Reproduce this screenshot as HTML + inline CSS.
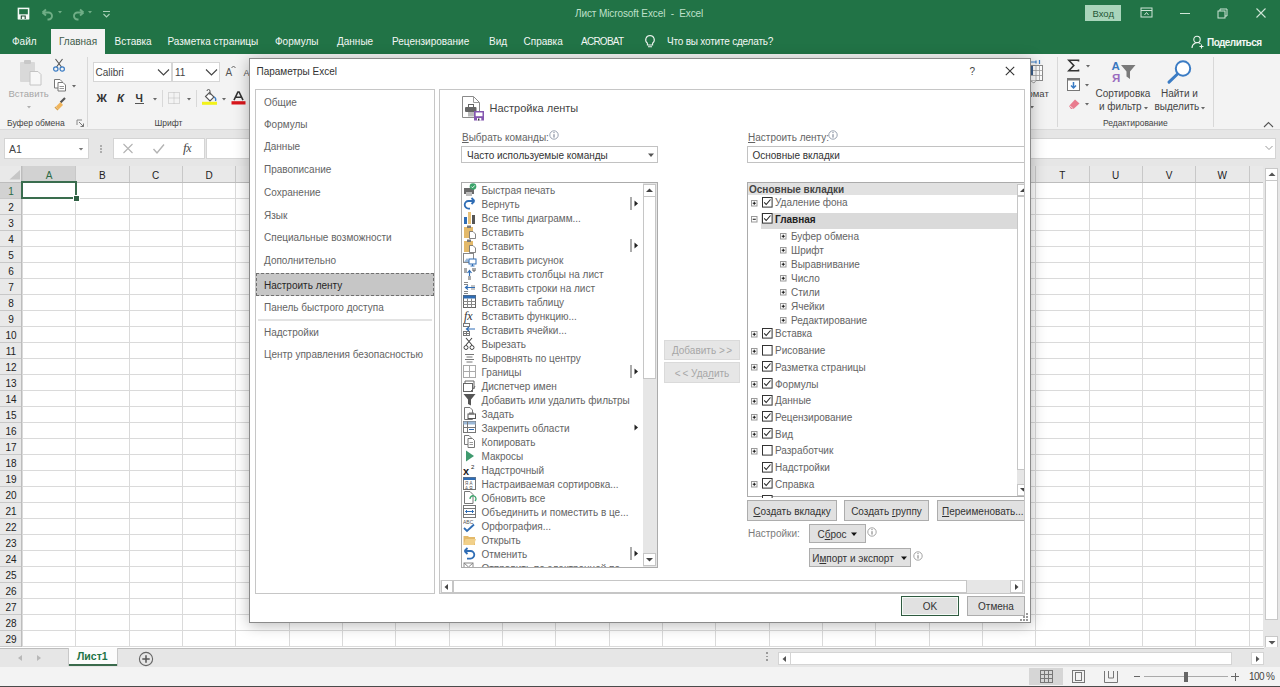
<!DOCTYPE html>
<html><head><meta charset="utf-8"><style>
html,body{margin:0;padding:0;}
body{width:1280px;height:687px;overflow:hidden;position:relative;background:#fff;font-family:"Liberation Sans", sans-serif;}
.a{position:absolute;}
.t{position:absolute;white-space:pre;line-height:1;}
</style></head><body>
<div class="a" style="left:0px;top:0px;width:1280px;height:54px;background:#217346"></div>
<svg class="a" style="left:17px;top:7px;" width="14" height="14" viewBox="0 0 14 14"><rect x="1.4" y="1.4" width="10.2" height="10.2" fill="none" stroke="#f4faf6" stroke-width="1.5"/><rect x="1" y="7.3" width="11" height="5" fill="#f4faf6"/><path d="M4.3 12 V9 H8.2 V12" fill="none" stroke="#1d4a30" stroke-width="1.1"/></svg>
<svg class="a" style="left:40px;top:7px;" width="16" height="14" viewBox="0 0 16 14"><path d="M2.5 5.5 L6 2.5 M2.5 5.5 L6 8.5 M2.5 5.5 H8.5 a3.5 3.5 0 0 1 0 7 H7.5" fill="none" stroke="#6fae86" stroke-width="1.9"/></svg>
<svg class="a" style="left:56px;top:9px;" width="8" height="6" viewBox="0 0 8 6"><path d="M2 2.0 L6 2.0 L4 4.5 Z" fill="#6fae86"/></svg>
<svg class="a" style="left:70px;top:7px;" width="16" height="14" viewBox="0 0 16 14"><path d="M13.5 5.5 L10 2.5 M13.5 5.5 L10 8.5 M13.5 5.5 H7.5 a3.5 3.5 0 0 0 0 7 H8.5" fill="none" stroke="#6fae86" stroke-width="1.9"/></svg>
<svg class="a" style="left:86px;top:9px;" width="8" height="6" viewBox="0 0 8 6"><path d="M2 2.0 L6 2.0 L4 4.5 Z" fill="#6fae86"/></svg>
<svg class="a" style="left:102px;top:10px;" width="10" height="8" viewBox="0 0 10 8"><path d="M1 1.5 H8 M1.5 4 L4.5 7 L7.5 4" fill="none" stroke="#a9cfb7" stroke-width="1.1"/></svg>
<div class="t " style="left:575px;top:9px;font-size:10px;color:#bfe0ca;letter-spacing:-0.1px">Лист Microsoft Excel&nbsp; - &nbsp;Excel</div>
<div class="a" style="left:1085px;top:5px;width:36px;height:16px;background:#a9d5bb"></div>
<div class="t " style="left:1092.5px;top:9px;font-size:9.5px;color:#1f5636;">Вход</div>
<svg class="a" style="left:1140px;top:7px;" width="13" height="11" viewBox="0 0 13 11"><rect x="1" y="1" width="11" height="9" fill="none" stroke="#cfe5d7" stroke-width="1"/><path d="M1 3.5 H12" stroke="#cfe5d7"/><path d="M4.5 8 L6.5 5.5 L8.5 8" fill="none" stroke="#cfe5d7"/></svg>
<div class="a" style="left:1180px;top:13px;width:10px;height:1px;background:#cfe5d7"></div>
<svg class="a" style="left:1217px;top:8px;" width="12" height="11" viewBox="0 0 12 11"><rect x="1" y="3" width="7" height="7" fill="none" stroke="#cfe5d7"/><path d="M3 3 V1 H10 V8 H8" fill="none" stroke="#cfe5d7"/></svg>
<svg class="a" style="left:1255px;top:7px;" width="12" height="12" viewBox="0 0 12 12"><path d="M1.5 1.5 L10.5 10.5 M10.5 1.5 L1.5 10.5" stroke="#cfe5d7" stroke-width="1.1"/></svg>
<div class="a" style="left:51px;top:29px;width:54px;height:25px;background:#f3f3f3"></div>
<div class="t " style="left:12px;top:37px;font-size:10px;color:#f2f7f4;">Файл</div>
<div class="t " style="left:114.5px;top:37px;font-size:10px;color:#f2f7f4;">Вставка</div>
<div class="t " style="left:167.5px;top:37px;font-size:10px;color:#f2f7f4;">Разметка страницы</div>
<div class="t " style="left:275px;top:37px;font-size:10px;color:#f2f7f4;">Формулы</div>
<div class="t " style="left:337px;top:37px;font-size:10px;color:#f2f7f4;">Данные</div>
<div class="t " style="left:392px;top:37px;font-size:10px;color:#f2f7f4;">Рецензирование</div>
<div class="t " style="left:489px;top:37px;font-size:10px;color:#f2f7f4;">Вид</div>
<div class="t " style="left:523.5px;top:37px;font-size:10px;color:#f2f7f4;">Справка</div>
<div class="t " style="left:581px;top:37px;font-size:10px;color:#f2f7f4;letter-spacing:-0.75px">ACROBAT</div>
<div class="t " style="left:667px;top:37px;font-size:10px;color:#f2f7f4;letter-spacing:-0.2px">Что вы хотите сделать?</div>
<div class="t " style="left:59px;top:37px;font-size:10px;color:#3f5c4b;">Главная</div>
<svg class="a" style="left:643px;top:34px;" width="14" height="15" viewBox="0 0 14 15"><path d="M7 1.5 a4.3 4.3 0 0 1 2.6 7.7 V11 H4.4 V9.2 A4.3 4.3 0 0 1 7 1.5 Z M5 12.7 H9" fill="none" stroke="#eef5f0" stroke-width="1.1"/></svg>
<svg class="a" style="left:1191px;top:35px;" width="15" height="14" viewBox="0 0 15 14"><circle cx="6" cy="4.5" r="3.2" fill="none" stroke="#eef5f0" stroke-width="1.1"/><path d="M1 13 a5.2 5.2 0 0 1 8.5 -4.2 M10.5 9.5 V13.5 M8.5 11.5 H12.5" fill="none" stroke="#eef5f0" stroke-width="1.1"/></svg>
<div class="t " style="left:1207px;top:38px;font-size:10px;color:#f2f7f4;font-weight:bold;letter-spacing:-0.55px">Поделиться</div>
<div class="a" style="left:0px;top:54px;width:1280px;height:76px;background:#f3f3f3"></div>
<div class="a" style="left:0px;top:129px;width:1280px;height:1px;background:#dadada"></div>
<svg class="a" style="left:17px;top:58px;" width="26" height="30" viewBox="0 0 26 30"><rect x="3" y="4" width="15" height="20" rx="1" fill="#d9d9d9"/><rect x="7" y="2" width="7" height="4" rx="1" fill="#c8c8c8"/><path d="M13 13.5 H21 L24 16.5 V27 H13 Z" fill="#f7f7f7" stroke="#c4c4c4"/></svg>
<div class="t " style="left:8.5px;top:89px;font-size:9.5px;color:#a6a6a6;">Вставить</div>
<svg class="a" style="left:24.5px;top:104px;" width="8" height="6" viewBox="0 0 8 6"><path d="M2 2.0 L6 2.0 L4 4.5 Z" fill="#b0b0b0"/></svg>
<svg class="a" style="left:52px;top:58px;" width="14" height="14" viewBox="0 0 14 14"><path d="M3.5 1 L9.5 9 M10.5 1 L4.5 9" stroke="#555" stroke-width="1.1"/><circle cx="3.8" cy="11" r="2.2" fill="none" stroke="#3b7cc4" stroke-width="1.2"/><circle cx="10.2" cy="11" r="2.2" fill="none" stroke="#3b7cc4" stroke-width="1.2"/></svg>
<svg class="a" style="left:53px;top:78px;" width="14" height="14" viewBox="0 0 14 14"><path d="M1.5 1.5 H7 L9 3.5 V10 H1.5 Z" fill="#fff" stroke="#777"/><path d="M5 4.5 H10 L12.5 7 V13 H5 Z" fill="#fff" stroke="#777"/><path d="M6.5 8.5 H11 M6.5 10.5 H11" stroke="#999"/></svg>
<svg class="a" style="left:70px;top:82.5px;" width="8" height="6" viewBox="0 0 8 6"><path d="M2 2.0 L6 2.0 L4 4.5 Z" fill="#666"/></svg>
<svg class="a" style="left:53px;top:97px;" width="14" height="14" viewBox="0 0 14 14"><path d="M12 1 L7.5 5.5" stroke="#555" stroke-width="2.2"/><path d="M7.5 5 L3 9.5 L5.5 12.5 L10 8 Z" fill="#f0b45a"/><path d="M2 10 L5 13" stroke="#d9a14b" stroke-width="1.5"/></svg>
<div class="t " style="left:7px;top:119px;font-size:8.5px;color:#444;">Буфер обмена</div>
<svg class="a" style="left:76px;top:119px;" width="9" height="9" viewBox="0 0 9 9"><path d="M1 1 H6 M1 1 V6" stroke="#888"/><path d="M3 3 L7.5 7.5 M7.5 4.5 V7.5 H4.5" fill="none" stroke="#777"/></svg>
<div class="a" style="left:87px;top:57px;width:1px;height:70px;background:#d8d8d8"></div>
<div class="a" style="left:93px;top:62px;width:79px;height:20px;background:#fff;box-sizing:border-box;border:1px solid #d6d6d6"></div>
<div class="t " style="left:95.5px;top:68px;font-size:10px;color:#444;">Calibri</div>
<svg class="a" style="left:157px;top:68px;" width="13" height="9" viewBox="0 0 13 9"><path d="M1 1.5 L6.5 7 L12 1.5" fill="none" stroke="#444" stroke-width="1.1"/></svg>
<div class="a" style="left:172px;top:62px;width:48px;height:20px;background:#fff;box-sizing:border-box;border:1px solid #d6d6d6"></div>
<div class="t " style="left:175px;top:68px;font-size:10px;color:#444;">11</div>
<svg class="a" style="left:205px;top:68px;" width="13" height="9" viewBox="0 0 13 9"><path d="M1 1.5 L6.5 7 L12 1.5" fill="none" stroke="#444" stroke-width="1.1"/></svg>
<div class="t " style="left:225.5px;top:68px;font-size:10px;color:#555;">A</div>
<svg class="a" style="left:231px;top:65px;" width="5" height="4" viewBox="0 0 5 4"><path d="M0.5 3 L2.5 1 L4.5 3" fill="none" stroke="#555" stroke-width="0.9"/></svg>
<div class="t " style="left:243.5px;top:69px;font-size:9px;color:#555;">A</div>
<div class="t " style="left:96.5px;top:93px;font-size:11.5px;color:#333;font-weight:bold">Ж</div>
<div class="t " style="left:117px;top:93px;font-size:11.5px;color:#333;font-weight:bold;font-style:italic">К</div>
<div class="t " style="left:135.5px;top:93px;font-size:10.5px;color:#333;font-weight:bold">Ч</div>
<div class="a" style="left:135px;top:103px;width:9px;height:1.3px;background:#555"></div>
<svg class="a" style="left:150.5px;top:95.5px;" width="8" height="6" viewBox="0 0 8 6"><path d="M2 2.0 L6 2.0 L4 4.5 Z" fill="#666"/></svg>
<div class="a" style="left:162px;top:90px;width:1px;height:17px;background:#d8d8d8"></div>
<svg class="a" style="left:168px;top:92px;" width="13" height="13" viewBox="0 0 13 13"><rect x="0.5" y="0.5" width="11" height="11" fill="none" stroke="#bbb" stroke-dasharray="1 1"/><path d="M6 0.5 V11.5 M0.5 6 H11.5" stroke="#bbb" stroke-dasharray="1 1"/></svg>
<svg class="a" style="left:185px;top:95.5px;" width="8" height="6" viewBox="0 0 8 6"><path d="M2 2.0 L6 2.0 L4 4.5 Z" fill="#666"/></svg>
<div class="a" style="left:196px;top:90px;width:1px;height:17px;background:#d8d8d8"></div>
<svg class="a" style="left:201px;top:89px;" width="17" height="17" viewBox="0 0 17 17"><path d="M4.5 7.5 L8.5 3.5 L13 8 L9 12 Z" fill="#fff" stroke="#555" stroke-width="1.1"/><path d="M6 2 a1.5 1.5 0 0 1 3 0 V6" fill="none" stroke="#555"/><path d="M13 8 q2.5 1 1.5 4" fill="none" stroke="#3b7cc4" stroke-width="1.3"/><rect x="1" y="12.8" width="15" height="3" fill="#f2f21a"/></svg>
<svg class="a" style="left:219.5px;top:95.5px;" width="8" height="6" viewBox="0 0 8 6"><path d="M2 2.0 L6 2.0 L4 4.5 Z" fill="#666"/></svg>
<svg class="a" style="left:230px;top:89px;" width="17" height="17" viewBox="0 0 17 17"><path d="M4 11.2 L7.9 3 H9.1 L13 11.2 M5.8 8.3 H11.2" fill="none" stroke="#333" stroke-width="1.6"/><rect x="1.5" y="12.2" width="14" height="3.3" fill="#d9161c"/></svg>
<div class="t " style="left:154.5px;top:119px;font-size:8.5px;color:#444;">Шрифт</div>
<svg class="a" style="left:1027px;top:58px;" width="18" height="28" viewBox="0 0 18 28"><path d="M2 4 H9 M9 2.5 V5.5 M12.5 2 V6" stroke="#3b7cc4" stroke-width="1.2"/><rect x="2.5" y="7.5" width="13" height="15" fill="#fff" stroke="#8a8a8a"/><path d="M2.5 12.5 H15.5 M2.5 17.5 H15.5 M9 7.5 V22.5 M12.5 7.5 V22.5" stroke="#a0a0a0" stroke-width="0.8"/><rect x="3" y="8" width="3" height="9" fill="#3b5f8c"/><path d="M3 22.5 L7 25 L9 22.5" fill="#fff" stroke="#8a8a8a" stroke-width="0.8"/></svg>
<div class="t " style="left:1027.5px;top:89px;font-size:9.5px;color:#444;">омат</div>
<svg class="a" style="left:1028px;top:104px;" width="8" height="6" viewBox="0 0 8 6"><path d="M2 2.0 L6 2.0 L4 4.5 Z" fill="#666"/></svg>
<div class="a" style="left:1057px;top:57px;width:1px;height:70px;background:#d8d8d8"></div>
<svg class="a" style="left:1067px;top:59px;" width="13" height="13" viewBox="0 0 13 13"><path d="M11.5 2.5 V1.2 H1.8 L6.8 6.5 L1.8 11.8 H11.5 V10.5" fill="none" stroke="#333" stroke-width="1.6"/></svg>
<svg class="a" style="left:1084px;top:62.5px;" width="8" height="6" viewBox="0 0 8 6"><path d="M2 2.0 L6 2.0 L4 4.5 Z" fill="#666"/></svg>
<svg class="a" style="left:1067px;top:78px;" width="13" height="14" viewBox="0 0 13 14"><rect x="0.5" y="0.5" width="12" height="12" fill="#fff" stroke="#777"/><rect x="0.5" y="0.5" width="12" height="2" fill="#777"/><path d="M6.5 4 V10 M4 7.5 L6.5 10 L9 7.5" fill="none" stroke="#3b7cc4" stroke-width="1.5"/></svg>
<svg class="a" style="left:1082.5px;top:81.5px;" width="8" height="6" viewBox="0 0 8 6"><path d="M2 2.0 L6 2.0 L4 4.5 Z" fill="#666"/></svg>
<svg class="a" style="left:1067px;top:97px;" width="14" height="13" viewBox="0 0 14 13"><path d="M2 9 L8 2.5 L12.5 6.5 L6.5 12 H4 Z" fill="#e97b8e"/><path d="M2.5 8.5 L6.5 12" stroke="#f3f3f3" stroke-width="0.8"/></svg>
<svg class="a" style="left:1082.5px;top:101px;" width="8" height="6" viewBox="0 0 8 6"><path d="M2 2.0 L6 2.0 L4 4.5 Z" fill="#666"/></svg>
<svg class="a" style="left:1110px;top:59px;" width="27" height="24" viewBox="0 0 27 24"><text x="1.5" y="10.6" font-family="Liberation Sans" font-weight="bold" font-size="11.5" fill="#3a78c0">А</text><text x="2" y="22.6" font-family="Liberation Sans" font-weight="bold" font-size="11.5" fill="#9a6cbf">Я</text><path d="M11 6 H25.5 L20 12.5 V20 L16.5 17.5 V12.5 Z" fill="#7a7a7a"/></svg>
<div class="t " style="left:1095.5px;top:89px;font-size:10px;color:#444;">Сортировка</div>
<div class="t " style="left:1099px;top:102px;font-size:10px;color:#444;">и фильтр</div>
<svg class="a" style="left:1141.5px;top:104.5px;" width="8" height="6" viewBox="0 0 8 6"><path d="M2 2.0 L6 2.0 L4 4.5 Z" fill="#666"/></svg>
<svg class="a" style="left:1166px;top:59px;" width="28" height="26" viewBox="0 0 28 26"><circle cx="17" cy="9.5" r="7.2" fill="#fff" stroke="#3b7cc4" stroke-width="2"/><path d="M11.5 15 L3 23.2" stroke="#3b7cc4" stroke-width="3" stroke-linecap="round"/></svg>
<div class="t " style="left:1161px;top:89px;font-size:10px;color:#444;">Найти и</div>
<div class="t " style="left:1154.5px;top:102px;font-size:10px;color:#444;">выделить</div>
<svg class="a" style="left:1199px;top:104.5px;" width="8" height="6" viewBox="0 0 8 6"><path d="M2 2.0 L6 2.0 L4 4.5 Z" fill="#666"/></svg>
<div class="t " style="left:1103px;top:119px;font-size:8.5px;color:#444;">Редактирование</div>
<div class="a" style="left:1213px;top:57px;width:1px;height:70px;background:#d8d8d8"></div>
<svg class="a" style="left:1263px;top:121px;" width="11" height="7" viewBox="0 0 11 7"><path d="M1 6 L5.5 1.5 L10 6" fill="none" stroke="#555" stroke-width="1.1"/></svg>
<div class="a" style="left:0px;top:130px;width:1280px;height:37px;background:#e6e6e6"></div>
<div class="a" style="left:4px;top:138px;width:85px;height:21px;background:#fff;box-sizing:border-box;border:1px solid #d4d4d4"></div>
<div class="t " style="left:9px;top:144px;font-size:10.5px;color:#444;">A1</div>
<svg class="a" style="left:76.5px;top:145.5px;" width="8" height="6" viewBox="0 0 8 6"><path d="M1.7999999999999998 1.9 L6.2 1.9 L4 4.6 Z" fill="#777"/></svg>
<div class="a" style="left:100px;top:145px;width:1.6px;height:1.6px;background:#9a9a9a;border-radius:1px"></div>
<div class="a" style="left:100px;top:148px;width:1.6px;height:1.6px;background:#9a9a9a;border-radius:1px"></div>
<div class="a" style="left:100px;top:151px;width:1.6px;height:1.6px;background:#9a9a9a;border-radius:1px"></div>
<div class="a" style="left:113px;top:138px;width:92px;height:21px;background:#fff;box-sizing:border-box;border:1px solid #d4d4d4"></div>
<svg class="a" style="left:122px;top:143px;" width="12" height="11" viewBox="0 0 12 11"><path d="M1.5 1 L10.5 10 M10.5 1 L1.5 10" stroke="#b3b3b3" stroke-width="1.1"/></svg>
<svg class="a" style="left:152px;top:143px;" width="13" height="12" viewBox="0 0 13 12"><path d="M1.5 6 L5 10 L12 1.5" fill="none" stroke="#b3b3b3" stroke-width="1.4"/></svg>
<div class="t" style="left:183px;top:141px;font-family:'Liberation Serif',serif;font-style:italic;font-size:13.5px;color:#4a4a4a;letter-spacing:-0.5px">f<span style="font-size:12px">x</span></div>
<div class="a" style="left:206px;top:138px;width:1070px;height:21px;background:#fff;box-sizing:border-box;border:1px solid #d4d4d4"></div>
<svg class="a" style="left:1264px;top:144px;" width="10" height="8" viewBox="0 0 10 8"><path d="M1.5 2 L5 5.5 L8.5 2" fill="none" stroke="#999" stroke-width="1"/></svg>
<div class="a" style="left:0px;top:166px;width:1263px;height:16px;background:#e9e9e9"></div>
<div class="a" style="left:0px;top:182px;width:22px;height:466px;background:#e9e9e9"></div>
<svg class="a" style="left:8px;top:169px;" width="13" height="11" viewBox="0 0 13 11"><path d="M12 1 V10.5 H1.5 Z" fill="#c6c6c6"/></svg>
<div class="a" style="left:22px;top:166px;width:54px;height:16px;background:#d2d2d2"></div>
<div class="a" style="left:0px;top:182px;width:22px;height:16px;background:#d2d2d2"></div>
<svg class="a" style="left:0px;top:0px;pointer-events:none" width="1280" height="687" viewBox="0 0 1280 687"><path d="M22.50 182 V647" stroke="#dadada" stroke-width="1"/><path d="M22.50 166 V182" stroke="#c8c8c8" stroke-width="1"/><path d="M75.50 182 V647" stroke="#dadada" stroke-width="1"/><path d="M75.50 166 V182" stroke="#c8c8c8" stroke-width="1"/><path d="M129.50 182 V647" stroke="#dadada" stroke-width="1"/><path d="M129.50 166 V182" stroke="#c8c8c8" stroke-width="1"/><path d="M182.50 182 V647" stroke="#dadada" stroke-width="1"/><path d="M182.50 166 V182" stroke="#c8c8c8" stroke-width="1"/><path d="M235.50 182 V647" stroke="#dadada" stroke-width="1"/><path d="M235.50 166 V182" stroke="#c8c8c8" stroke-width="1"/><path d="M289.50 182 V647" stroke="#dadada" stroke-width="1"/><path d="M289.50 166 V182" stroke="#c8c8c8" stroke-width="1"/><path d="M342.50 182 V647" stroke="#dadada" stroke-width="1"/><path d="M342.50 166 V182" stroke="#c8c8c8" stroke-width="1"/><path d="M395.50 182 V647" stroke="#dadada" stroke-width="1"/><path d="M395.50 166 V182" stroke="#c8c8c8" stroke-width="1"/><path d="M449.50 182 V647" stroke="#dadada" stroke-width="1"/><path d="M449.50 166 V182" stroke="#c8c8c8" stroke-width="1"/><path d="M502.50 182 V647" stroke="#dadada" stroke-width="1"/><path d="M502.50 166 V182" stroke="#c8c8c8" stroke-width="1"/><path d="M555.50 182 V647" stroke="#dadada" stroke-width="1"/><path d="M555.50 166 V182" stroke="#c8c8c8" stroke-width="1"/><path d="M609.50 182 V647" stroke="#dadada" stroke-width="1"/><path d="M609.50 166 V182" stroke="#c8c8c8" stroke-width="1"/><path d="M662.50 182 V647" stroke="#dadada" stroke-width="1"/><path d="M662.50 166 V182" stroke="#c8c8c8" stroke-width="1"/><path d="M715.50 182 V647" stroke="#dadada" stroke-width="1"/><path d="M715.50 166 V182" stroke="#c8c8c8" stroke-width="1"/><path d="M769.50 182 V647" stroke="#dadada" stroke-width="1"/><path d="M769.50 166 V182" stroke="#c8c8c8" stroke-width="1"/><path d="M822.50 182 V647" stroke="#dadada" stroke-width="1"/><path d="M822.50 166 V182" stroke="#c8c8c8" stroke-width="1"/><path d="M875.50 182 V647" stroke="#dadada" stroke-width="1"/><path d="M875.50 166 V182" stroke="#c8c8c8" stroke-width="1"/><path d="M929.50 182 V647" stroke="#dadada" stroke-width="1"/><path d="M929.50 166 V182" stroke="#c8c8c8" stroke-width="1"/><path d="M982.50 182 V647" stroke="#dadada" stroke-width="1"/><path d="M982.50 166 V182" stroke="#c8c8c8" stroke-width="1"/><path d="M1035.50 182 V647" stroke="#dadada" stroke-width="1"/><path d="M1035.50 166 V182" stroke="#c8c8c8" stroke-width="1"/><path d="M1089.50 182 V647" stroke="#dadada" stroke-width="1"/><path d="M1089.50 166 V182" stroke="#c8c8c8" stroke-width="1"/><path d="M1142.50 182 V647" stroke="#dadada" stroke-width="1"/><path d="M1142.50 166 V182" stroke="#c8c8c8" stroke-width="1"/><path d="M1195.50 182 V647" stroke="#dadada" stroke-width="1"/><path d="M1195.50 166 V182" stroke="#c8c8c8" stroke-width="1"/><path d="M1249.50 182 V647" stroke="#dadada" stroke-width="1"/><path d="M1249.50 166 V182" stroke="#c8c8c8" stroke-width="1"/><path d="M1302.50 182 V647" stroke="#dadada" stroke-width="1"/><path d="M1302.50 166 V182" stroke="#c8c8c8" stroke-width="1"/><path d="M22 182.5 H1263" stroke="#dadada" stroke-width="1"/><path d="M0 182.5 H22" stroke="#c8c8c8" stroke-width="1"/><path d="M22 198.5 H1263" stroke="#dadada" stroke-width="1"/><path d="M0 198.5 H22" stroke="#c8c8c8" stroke-width="1"/><path d="M22 214.5 H1263" stroke="#dadada" stroke-width="1"/><path d="M0 214.5 H22" stroke="#c8c8c8" stroke-width="1"/><path d="M22 230.5 H1263" stroke="#dadada" stroke-width="1"/><path d="M0 230.5 H22" stroke="#c8c8c8" stroke-width="1"/><path d="M22 246.5 H1263" stroke="#dadada" stroke-width="1"/><path d="M0 246.5 H22" stroke="#c8c8c8" stroke-width="1"/><path d="M22 262.5 H1263" stroke="#dadada" stroke-width="1"/><path d="M0 262.5 H22" stroke="#c8c8c8" stroke-width="1"/><path d="M22 278.5 H1263" stroke="#dadada" stroke-width="1"/><path d="M0 278.5 H22" stroke="#c8c8c8" stroke-width="1"/><path d="M22 294.5 H1263" stroke="#dadada" stroke-width="1"/><path d="M0 294.5 H22" stroke="#c8c8c8" stroke-width="1"/><path d="M22 310.5 H1263" stroke="#dadada" stroke-width="1"/><path d="M0 310.5 H22" stroke="#c8c8c8" stroke-width="1"/><path d="M22 326.5 H1263" stroke="#dadada" stroke-width="1"/><path d="M0 326.5 H22" stroke="#c8c8c8" stroke-width="1"/><path d="M22 342.5 H1263" stroke="#dadada" stroke-width="1"/><path d="M0 342.5 H22" stroke="#c8c8c8" stroke-width="1"/><path d="M22 358.5 H1263" stroke="#dadada" stroke-width="1"/><path d="M0 358.5 H22" stroke="#c8c8c8" stroke-width="1"/><path d="M22 374.5 H1263" stroke="#dadada" stroke-width="1"/><path d="M0 374.5 H22" stroke="#c8c8c8" stroke-width="1"/><path d="M22 390.5 H1263" stroke="#dadada" stroke-width="1"/><path d="M0 390.5 H22" stroke="#c8c8c8" stroke-width="1"/><path d="M22 406.5 H1263" stroke="#dadada" stroke-width="1"/><path d="M0 406.5 H22" stroke="#c8c8c8" stroke-width="1"/><path d="M22 422.5 H1263" stroke="#dadada" stroke-width="1"/><path d="M0 422.5 H22" stroke="#c8c8c8" stroke-width="1"/><path d="M22 438.5 H1263" stroke="#dadada" stroke-width="1"/><path d="M0 438.5 H22" stroke="#c8c8c8" stroke-width="1"/><path d="M22 454.5 H1263" stroke="#dadada" stroke-width="1"/><path d="M0 454.5 H22" stroke="#c8c8c8" stroke-width="1"/><path d="M22 470.5 H1263" stroke="#dadada" stroke-width="1"/><path d="M0 470.5 H22" stroke="#c8c8c8" stroke-width="1"/><path d="M22 486.5 H1263" stroke="#dadada" stroke-width="1"/><path d="M0 486.5 H22" stroke="#c8c8c8" stroke-width="1"/><path d="M22 502.5 H1263" stroke="#dadada" stroke-width="1"/><path d="M0 502.5 H22" stroke="#c8c8c8" stroke-width="1"/><path d="M22 518.5 H1263" stroke="#dadada" stroke-width="1"/><path d="M0 518.5 H22" stroke="#c8c8c8" stroke-width="1"/><path d="M22 534.5 H1263" stroke="#dadada" stroke-width="1"/><path d="M0 534.5 H22" stroke="#c8c8c8" stroke-width="1"/><path d="M22 550.5 H1263" stroke="#dadada" stroke-width="1"/><path d="M0 550.5 H22" stroke="#c8c8c8" stroke-width="1"/><path d="M22 566.5 H1263" stroke="#dadada" stroke-width="1"/><path d="M0 566.5 H22" stroke="#c8c8c8" stroke-width="1"/><path d="M22 582.5 H1263" stroke="#dadada" stroke-width="1"/><path d="M0 582.5 H22" stroke="#c8c8c8" stroke-width="1"/><path d="M22 598.5 H1263" stroke="#dadada" stroke-width="1"/><path d="M0 598.5 H22" stroke="#c8c8c8" stroke-width="1"/><path d="M22 614.5 H1263" stroke="#dadada" stroke-width="1"/><path d="M0 614.5 H22" stroke="#c8c8c8" stroke-width="1"/><path d="M22 630.5 H1263" stroke="#dadada" stroke-width="1"/><path d="M0 630.5 H22" stroke="#c8c8c8" stroke-width="1"/><path d="M22 646.5 H1263" stroke="#dadada" stroke-width="1"/><path d="M0 646.5 H22" stroke="#c8c8c8" stroke-width="1"/></svg>
<div class="a" style="left:0px;top:181.5px;width:1263px;height:1px;background:#bdbdbd"></div>
<div class="a" style="left:21px;top:166px;width:1px;height:482px;background:#bdbdbd"></div>
<div class="t" style="left:-150.98333333333335px;width:400px;text-align:center;top:171px;font-size:10px;color:#2d6a46;">A</div>
<div class="t" style="left:-97.64999999999999px;width:400px;text-align:center;top:171px;font-size:10px;color:#222;">B</div>
<div class="t" style="left:-44.31666666666666px;width:400px;text-align:center;top:171px;font-size:10px;color:#222;">C</div>
<div class="t" style="left:9.016666666666652px;width:400px;text-align:center;top:171px;font-size:10px;color:#222;">D</div>
<div class="t" style="left:62.35000000000002px;width:400px;text-align:center;top:171px;font-size:10px;color:#222;">E</div>
<div class="t" style="left:115.6833333333334px;width:400px;text-align:center;top:171px;font-size:10px;color:#222;">F</div>
<div class="t" style="left:169.0166666666667px;width:400px;text-align:center;top:171px;font-size:10px;color:#222;">G</div>
<div class="t" style="left:222.35000000000008px;width:400px;text-align:center;top:171px;font-size:10px;color:#222;">H</div>
<div class="t" style="left:275.6833333333334px;width:400px;text-align:center;top:171px;font-size:10px;color:#222;">I</div>
<div class="t" style="left:329.01666666666665px;width:400px;text-align:center;top:171px;font-size:10px;color:#222;">J</div>
<div class="t" style="left:382.35px;width:400px;text-align:center;top:171px;font-size:10px;color:#222;">K</div>
<div class="t" style="left:435.6833333333334px;width:400px;text-align:center;top:171px;font-size:10px;color:#222;">L</div>
<div class="t" style="left:489.01666666666665px;width:400px;text-align:center;top:171px;font-size:10px;color:#222;">M</div>
<div class="t" style="left:542.35px;width:400px;text-align:center;top:171px;font-size:10px;color:#222;">N</div>
<div class="t" style="left:595.6833333333334px;width:400px;text-align:center;top:171px;font-size:10px;color:#222;">O</div>
<div class="t" style="left:649.0166666666667px;width:400px;text-align:center;top:171px;font-size:10px;color:#222;">P</div>
<div class="t" style="left:702.35px;width:400px;text-align:center;top:171px;font-size:10px;color:#222;">Q</div>
<div class="t" style="left:755.6833333333334px;width:400px;text-align:center;top:171px;font-size:10px;color:#222;">R</div>
<div class="t" style="left:809.0166666666667px;width:400px;text-align:center;top:171px;font-size:10px;color:#222;">S</div>
<div class="t" style="left:862.3500000000001px;width:400px;text-align:center;top:171px;font-size:10px;color:#222;">T</div>
<div class="t" style="left:915.6833333333334px;width:400px;text-align:center;top:171px;font-size:10px;color:#222;">U</div>
<div class="t" style="left:969.0166666666667px;width:400px;text-align:center;top:171px;font-size:10px;color:#222;">V</div>
<div class="t" style="left:1022.3500000000001px;width:400px;text-align:center;top:171px;font-size:10px;color:#222;">W</div>
<div class="t" style="left:1075.6833333333334px;width:400px;text-align:center;top:171px;font-size:10px;color:#222;">X</div>
<div class="t" style="left:1px;width:20px;text-align:center;top:187px;font-size:10px;color:#2d6a46">1</div>
<div class="t" style="left:1px;width:20px;text-align:center;top:203px;font-size:10px;color:#222">2</div>
<div class="t" style="left:1px;width:20px;text-align:center;top:219px;font-size:10px;color:#222">3</div>
<div class="t" style="left:1px;width:20px;text-align:center;top:235px;font-size:10px;color:#222">4</div>
<div class="t" style="left:1px;width:20px;text-align:center;top:251px;font-size:10px;color:#222">5</div>
<div class="t" style="left:1px;width:20px;text-align:center;top:267px;font-size:10px;color:#222">6</div>
<div class="t" style="left:1px;width:20px;text-align:center;top:283px;font-size:10px;color:#222">7</div>
<div class="t" style="left:1px;width:20px;text-align:center;top:299px;font-size:10px;color:#222">8</div>
<div class="t" style="left:1px;width:20px;text-align:center;top:315px;font-size:10px;color:#222">9</div>
<div class="t" style="left:1px;width:20px;text-align:center;top:331px;font-size:10px;color:#222">10</div>
<div class="t" style="left:1px;width:20px;text-align:center;top:347px;font-size:10px;color:#222">11</div>
<div class="t" style="left:1px;width:20px;text-align:center;top:363px;font-size:10px;color:#222">12</div>
<div class="t" style="left:1px;width:20px;text-align:center;top:379px;font-size:10px;color:#222">13</div>
<div class="t" style="left:1px;width:20px;text-align:center;top:395px;font-size:10px;color:#222">14</div>
<div class="t" style="left:1px;width:20px;text-align:center;top:411px;font-size:10px;color:#222">15</div>
<div class="t" style="left:1px;width:20px;text-align:center;top:427px;font-size:10px;color:#222">16</div>
<div class="t" style="left:1px;width:20px;text-align:center;top:443px;font-size:10px;color:#222">17</div>
<div class="t" style="left:1px;width:20px;text-align:center;top:459px;font-size:10px;color:#222">18</div>
<div class="t" style="left:1px;width:20px;text-align:center;top:475px;font-size:10px;color:#222">19</div>
<div class="t" style="left:1px;width:20px;text-align:center;top:491px;font-size:10px;color:#222">20</div>
<div class="t" style="left:1px;width:20px;text-align:center;top:507px;font-size:10px;color:#222">21</div>
<div class="t" style="left:1px;width:20px;text-align:center;top:523px;font-size:10px;color:#222">22</div>
<div class="t" style="left:1px;width:20px;text-align:center;top:539px;font-size:10px;color:#222">23</div>
<div class="t" style="left:1px;width:20px;text-align:center;top:555px;font-size:10px;color:#222">24</div>
<div class="t" style="left:1px;width:20px;text-align:center;top:571px;font-size:10px;color:#222">25</div>
<div class="t" style="left:1px;width:20px;text-align:center;top:587px;font-size:10px;color:#222">26</div>
<div class="t" style="left:1px;width:20px;text-align:center;top:603px;font-size:10px;color:#222">27</div>
<div class="t" style="left:1px;width:20px;text-align:center;top:619px;font-size:10px;color:#222">28</div>
<div class="t" style="left:1px;width:20px;text-align:center;top:635px;font-size:10px;color:#222">29</div>
<div class="a" style="left:21px;top:181px;width:56px;height:18px;box-sizing:border-box;border:2px solid #3a6d4e"></div>
<div class="a" style="left:73.5px;top:195.5px;width:5px;height:5px;background:#2f6043;box-shadow:0 0 0 1px #fff"></div>
<div class="a" style="left:1263px;top:166px;width:17px;height:482px;background:#e6e6e6"></div>
<div class="a" style="left:1265px;top:168px;width:13px;height:13px;background:#fff;box-sizing:border-box;border:1px solid #c8c8c8"></div>
<svg class="a" style="left:1267px;top:171px;" width="10" height="7" viewBox="0 0 10 7"><path d="M1.5 5 L5 1.5 L8.5 5 Z" fill="#555"/></svg>
<div class="a" style="left:1265px;top:180px;width:13px;height:440px;background:#fff;box-sizing:border-box;border:1px solid #c8c8c8"></div>
<div class="a" style="left:1265px;top:636px;width:13px;height:13px;background:#fff;box-sizing:border-box;border:1px solid #c8c8c8"></div>
<svg class="a" style="left:1267px;top:639px;" width="10" height="7" viewBox="0 0 10 7"><path d="M1.5 2 L5 5.5 L8.5 2 Z" fill="#555"/></svg>
<div class="a" style="left:0px;top:647px;width:1280px;height:20px;background:#e6e6e6"></div>
<div class="a" style="left:0px;top:647px;width:1264px;height:1px;background:#fff"></div>
<div class="a" style="left:0px;top:648px;width:1264px;height:1px;background:#bdbdbd"></div>
<svg class="a" style="left:16px;top:654px;" width="8" height="8" viewBox="0 0 8 8"><path d="M6 1 L2 4 L6 7 Z" fill="#b8b8b8"/></svg>
<svg class="a" style="left:35px;top:654px;" width="8" height="8" viewBox="0 0 8 8"><path d="M2 1 L6 4 L2 7 Z" fill="#b8b8b8"/></svg>
<div class="a" style="left:69px;top:648px;width:48px;height:18px;background:#fcfcfc;box-shadow:1px 0 0 #c8c8c8,-1px 0 0 #c8c8c8"></div>
<div class="t " style="left:77px;top:651px;font-size:10.5px;color:#217346;font-weight:bold">Лист1</div>
<div class="a" style="left:69px;top:664px;width:48px;height:2px;background:#3b6b4d"></div>
<svg class="a" style="left:138px;top:650.5px;" width="16" height="16" viewBox="0 0 16 16"><circle cx="8" cy="8" r="6.6" fill="none" stroke="#666" stroke-width="1.1"/><path d="M8 4.3 V11.7 M4.3 8 H11.7" stroke="#555" stroke-width="1.5"/></svg>
<div class="a" style="left:766px;top:652px;width:1.5px;height:1.5px;background:#9a9a9a"></div>
<div class="a" style="left:766px;top:655.5px;width:1.5px;height:1.5px;background:#9a9a9a"></div>
<div class="a" style="left:766px;top:659px;width:1.5px;height:1.5px;background:#9a9a9a"></div>
<div class="a" style="left:778px;top:652px;width:13px;height:13px;background:#fff;box-sizing:border-box;border:1px solid #d4d4d4"></div>
<svg class="a" style="left:781px;top:655px;" width="7" height="8" viewBox="0 0 7 8"><path d="M5 1 L1.5 4 L5 7 Z" fill="#555"/></svg>
<div class="a" style="left:790px;top:652px;width:442px;height:13px;background:#fff;box-sizing:border-box;border:1px solid #d4d4d4"></div>
<div class="a" style="left:1251px;top:652px;width:13px;height:13px;background:#fff;box-sizing:border-box;border:1px solid #d4d4d4"></div>
<svg class="a" style="left:1254px;top:655px;" width="7" height="8" viewBox="0 0 7 8"><path d="M2 1 L5.5 4 L2 7 Z" fill="#555"/></svg>
<div class="a" style="left:0px;top:667px;width:1280px;height:20px;background:#f3f3f3"></div>
<div class="a" style="left:0px;top:686px;width:1280px;height:1px;background:#4a4a4a"></div>
<div class="a" style="left:1029px;top:668px;width:34px;height:17px;background:#d6d6d6"></div>
<svg class="a" style="left:1040px;top:670px;" width="13" height="13" viewBox="0 0 13 13"><rect x="0.5" y="0.5" width="12" height="12" fill="none" stroke="#777"/><path d="M4.5 0.5 V12.5 M8.5 0.5 V12.5 M0.5 4.5 H12.5 M0.5 8.5 H12.5" stroke="#777"/></svg>
<svg class="a" style="left:1072px;top:670px;" width="13" height="13" viewBox="0 0 13 13"><rect x="0.5" y="0.5" width="12" height="12" fill="none" stroke="#777"/><rect x="3.5" y="2.5" width="6" height="8" fill="none" stroke="#777"/></svg>
<svg class="a" style="left:1104px;top:670px;" width="14" height="13" viewBox="0 0 14 13"><path d="M0.5 1 V12.5 H13.5 V1 M4.5 1 V8 H9.5 V1" fill="none" stroke="#777"/></svg>
<div class="a" style="left:1134px;top:676px;width:6px;height:1px;background:#666"></div>
<div class="a" style="left:1144px;top:676px;width:84px;height:1px;background:#aaa"></div>
<div class="a" style="left:1184px;top:672px;width:4px;height:10px;background:#666"></div>
<div class="a" style="left:1231px;top:676px;width:8px;height:1px;background:#666"></div>
<div class="a" style="left:1234.5px;top:672.5px;width:1px;height:8px;background:#666"></div>
<div class="t " style="left:1249px;top:672px;font-size:10px;color:#444;letter-spacing:-0.6px">100 %</div>
<div class="a" style="left:249px;top:58px;width:782px;height:565px;background:#fff;box-sizing:border-box;border:1px solid #8a8a8a;box-shadow:0 2px 14px rgba(0,0,0,0.28)"></div>
<div class="t " style="left:256.5px;top:67px;font-size:10px;color:#333;">Параметры Excel</div>
<div class="t " style="left:969.5px;top:67px;font-size:10px;color:#444;">?</div>
<svg class="a" style="left:1005px;top:66px;" width="10" height="10" viewBox="0 0 10 10"><path d="M0.8 0.8 L9.2 9.2 M9.2 0.8 L0.8 9.2" stroke="#333" stroke-width="1.1"/></svg>
<div class="a" style="left:255px;top:89px;width:180px;height:505px;box-sizing:border-box;border:1px solid #c6c6c6"></div>
<div class="a" style="left:256px;top:273px;width:178px;height:23px;background:#c6c6c6;box-sizing:border-box;border:1px dashed #707070"></div>
<div class="a" style="left:258px;top:318.5px;width:174px;height:2px;background:#e3e3e3"></div>
<div class="t " style="left:264px;top:98px;font-size:10px;color:#646464;">Общие</div>
<div class="t " style="left:264px;top:120px;font-size:10px;color:#646464;">Формулы</div>
<div class="t " style="left:264px;top:142px;font-size:10px;color:#646464;">Данные</div>
<div class="t " style="left:264px;top:165px;font-size:10px;color:#646464;">Правописание</div>
<div class="t " style="left:264px;top:188px;font-size:10px;color:#646464;">Сохранение</div>
<div class="t " style="left:264px;top:211px;font-size:10px;color:#646464;">Язык</div>
<div class="t " style="left:264px;top:233px;font-size:10px;color:#646464;">Специальные возможности</div>
<div class="t " style="left:264px;top:256px;font-size:10px;color:#646464;">Дополнительно</div>
<div class="t " style="left:264px;top:281px;font-size:10px;color:#262626;">Настроить ленту</div>
<div class="t " style="left:264px;top:303px;font-size:10px;color:#646464;">Панель быстрого доступа</div>
<div class="t " style="left:264px;top:328px;font-size:10px;color:#646464;">Надстройки</div>
<div class="t " style="left:264px;top:350px;font-size:10px;color:#646464;">Центр управления безопасностью</div>
<div class="a" style="left:439px;top:89px;width:586px;height:505px;box-sizing:border-box;border:1px solid #c6c6c6"></div>
<div class="a" style="left:0;top:0;width:1280px;height:687px;clip-path:inset(90px 256px 94px 440px)">
<svg class="a" style="left:461px;top:95px;" width="25" height="27" viewBox="0 0 25 27"><path d="M1.5 1.5 H12.5 L18.5 7.5 V22.5 H1.5 Z" fill="#fff" stroke="#8a8a8a"/><path d="M12.5 1.5 V7.5 H18.5" fill="none" stroke="#9a9a9a"/><rect x="7.5" y="9.5" width="5" height="3.5" fill="#fff" stroke="#666"/><rect x="4" y="12" width="11.5" height="5" rx="1" fill="#666"/><rect x="7" y="17" width="6" height="4.5" fill="#bbb"/><rect x="13" y="16" width="10" height="9.5" fill="#8457b0"/><rect x="14.7" y="17.5" width="6.8" height="3.7" fill="#fff"/><rect x="16" y="23" width="4.3" height="2.5" fill="#fff"/><rect x="17" y="23.5" width="1.4" height="2" fill="#333"/></svg>
<div class="t " style="left:489.5px;top:103px;font-size:11px;color:#444;">Настройка ленты</div>
<div class="t " style="left:462px;top:133px;font-size:10px;color:#646464;"><u>В</u>ыбрать команды:</div>
<svg class="a" style="left:549px;top:130px;" width="10" height="10" viewBox="0 0 10 10"><circle cx="5" cy="5" r="4.2" fill="none" stroke="#8d97a8" stroke-width="0.9"/><path d="M5 4.2 V7.6" stroke="#6d7789" stroke-width="1"/><circle cx="5" cy="2.6" r="0.6" fill="#6d7789"/></svg>
<div class="a" style="left:461px;top:146px;width:197px;height:17px;box-sizing:border-box;border:1px solid #c2c2c2"></div>
<div class="t " style="left:467px;top:151px;font-size:10px;color:#333;">Часто используемые команды</div>
<svg class="a" style="left:646.5px;top:151.5px;" width="8" height="6" viewBox="0 0 8 6"><path d="M1 1.5 L7 1.5 L4 5.0 Z" fill="#555"/></svg>
<div class="t " style="left:748px;top:133px;font-size:10px;color:#646464;"><u>Н</u>астроить ленту:</div>
<svg class="a" style="left:828px;top:130px;" width="10" height="10" viewBox="0 0 10 10"><circle cx="5" cy="5" r="4.2" fill="none" stroke="#8d97a8" stroke-width="0.9"/><path d="M5 4.2 V7.6" stroke="#6d7789" stroke-width="1"/><circle cx="5" cy="2.6" r="0.6" fill="#6d7789"/></svg>
<div class="a" style="left:747px;top:146px;width:290px;height:17px;box-sizing:border-box;border:1px solid #c2c2c2"></div>
<div class="t " style="left:752.5px;top:151px;font-size:10px;color:#333;">Основные вкладки</div>
<div class="a" style="left:461px;top:182px;width:197px;height:386px;box-sizing:border-box;border:1px solid #ababab"></div>
<div class="a" style="left:462px;top:183px;width:181px;height:384px;overflow:hidden">
<div class="t" style="left:19.5px;top:3px;font-size:10px;color:#646464">Быстрая печать</div>
<div class="t" style="left:19.5px;top:17px;font-size:10px;color:#646464">Вернуть</div>
<div class="a" style="left:168px;top:13.800000000000011px;width:2px;height:13px;background:#ababab"></div>
<svg class="a" style="left:172px;top:16.80000000000001px" width="5" height="7"><path d="M0.5 0.5 L4 3.5 L0.5 6.5 Z" fill="#222"/></svg>
<div class="t" style="left:19.5px;top:31px;font-size:10px;color:#646464">Все типы диаграмм...</div>
<div class="t" style="left:19.5px;top:45px;font-size:10px;color:#646464">Вставить</div>
<div class="t" style="left:19.5px;top:59px;font-size:10px;color:#646464">Вставить</div>
<div class="a" style="left:168px;top:55.80000000000001px;width:2px;height:13px;background:#ababab"></div>
<svg class="a" style="left:172px;top:58.80000000000001px" width="5" height="7"><path d="M0.5 0.5 L4 3.5 L0.5 6.5 Z" fill="#222"/></svg>
<div class="t" style="left:19.5px;top:73px;font-size:10px;color:#646464">Вставить рисунок</div>
<div class="t" style="left:19.5px;top:87px;font-size:10px;color:#646464">Вставить столбцы на лист</div>
<div class="t" style="left:19.5px;top:101px;font-size:10px;color:#646464">Вставить строки на лист</div>
<div class="t" style="left:19.5px;top:115px;font-size:10px;color:#646464">Вставить таблицу</div>
<div class="t" style="left:19.5px;top:129px;font-size:10px;color:#646464">Вставить функцию...</div>
<div class="t" style="left:19.5px;top:143px;font-size:10px;color:#646464">Вставить ячейки...</div>
<div class="t" style="left:19.5px;top:157px;font-size:10px;color:#646464">Вырезать</div>
<div class="t" style="left:19.5px;top:171px;font-size:10px;color:#646464">Выровнять по центру</div>
<div class="t" style="left:19.5px;top:185px;font-size:10px;color:#646464">Границы</div>
<div class="a" style="left:168px;top:181.8px;width:2px;height:13px;background:#ababab"></div>
<svg class="a" style="left:172px;top:184.8px" width="5" height="7"><path d="M0.5 0.5 L4 3.5 L0.5 6.5 Z" fill="#222"/></svg>
<div class="t" style="left:19.5px;top:199px;font-size:10px;color:#646464">Диспетчер имен</div>
<div class="t" style="left:19.5px;top:213px;font-size:10px;color:#646464">Добавить или удалить фильтры</div>
<div class="t" style="left:19.5px;top:227px;font-size:10px;color:#646464">Задать</div>
<div class="t" style="left:19.5px;top:241px;font-size:10px;color:#646464">Закрепить области</div>
<svg class="a" style="left:172px;top:240.8px" width="5" height="7"><path d="M0.5 0.5 L4 3.5 L0.5 6.5 Z" fill="#222"/></svg>
<div class="t" style="left:19.5px;top:255px;font-size:10px;color:#646464">Копировать</div>
<div class="t" style="left:19.5px;top:269px;font-size:10px;color:#646464">Макросы</div>
<div class="t" style="left:19.5px;top:283px;font-size:10px;color:#646464">Надстрочный</div>
<div class="t" style="left:19.5px;top:297px;font-size:10px;color:#646464">Настраиваемая сортировка...</div>
<div class="t" style="left:19.5px;top:311px;font-size:10px;color:#646464">Обновить все</div>
<div class="t" style="left:19.5px;top:325px;font-size:10px;color:#646464">Объединить и поместить в це...</div>
<div class="t" style="left:19.5px;top:339px;font-size:10px;color:#646464">Орфография...</div>
<div class="t" style="left:19.5px;top:353px;font-size:10px;color:#646464">Открыть</div>
<div class="t" style="left:19.5px;top:367px;font-size:10px;color:#646464">Отменить</div>
<div class="a" style="left:168px;top:363.79999999999995px;width:2px;height:13px;background:#ababab"></div>
<svg class="a" style="left:172px;top:366.79999999999995px" width="5" height="7"><path d="M0.5 0.5 L4 3.5 L0.5 6.5 Z" fill="#222"/></svg>
<div class="t" style="left:19.5px;top:381px;font-size:10px;color:#646464">Отправить по электронной по...</div>
</div>
<svg class="a" style="left:463px;top:182.8px;" width="14" height="14" viewBox="0 0 14 14"><rect x="1" y="5" width="10" height="6" fill="#6a6a6a"/><rect x="3" y="9" width="6" height="4" fill="#bbb"/><circle cx="10" cy="3.5" r="3.3" fill="#3aa36a"/><path d="M8.4 3.6 L9.6 4.8 L11.8 2.4" fill="none" stroke="#fff" stroke-width="0.9"/></svg>
<svg class="a" style="left:463px;top:196.8px;" width="14" height="14" viewBox="0 0 14 14"><path d="M11.5 4 L8.5 1 M11.5 4 L8.5 7 M11.5 4 H5.5 a3.8 3.8 0 0 0 0 7.6 H7" fill="none" stroke="#2f6db5" stroke-width="1.8"/></svg>
<svg class="a" style="left:463px;top:210.8px;" width="14" height="14" viewBox="0 0 14 14"><rect x="1" y="6" width="3" height="7" fill="#2f6db5"/><rect x="5" y="1" width="3" height="12" fill="#e8c27a"/><rect x="9" y="4" width="3" height="9" fill="#555"/></svg>
<svg class="a" style="left:463px;top:224.8px;" width="14" height="14" viewBox="0 0 14 14"><rect x="1" y="2" width="9" height="11" fill="#e3b96a"/><rect x="4" y="0.5" width="4" height="2.5" fill="#777"/><path d="M6.5 6.5 H10 L12.5 9 V13.5 H6.5 Z" fill="#fff" stroke="#666" stroke-width="0.8"/></svg>
<svg class="a" style="left:463px;top:238.8px;" width="14" height="14" viewBox="0 0 14 14"><rect x="1" y="2" width="9" height="11" fill="#e3b96a"/><rect x="4" y="0.5" width="4" height="2.5" fill="#777"/><path d="M6.5 6.5 H10 L12.5 9 V13.5 H6.5 Z" fill="#fff" stroke="#666" stroke-width="0.8"/></svg>
<svg class="a" style="left:463px;top:252.8px;" width="14" height="14" viewBox="0 0 14 14"><rect x="0.5" y="0.5" width="10" height="9" fill="#fff" stroke="#888"/><path d="M1 9 L4 5 L7 9 Z" fill="#9ab7d6"/><rect x="6" y="6" width="7" height="5" fill="#fff" stroke="#2f6db5"/><path d="M9.5 11 V13 M7.5 13 H11.5" stroke="#2f6db5"/></svg>
<svg class="a" style="left:463px;top:266.8px;" width="14" height="14" viewBox="0 0 14 14"><rect x="1" y="1" width="3" height="5" fill="#aaa"/><path d="M6.5 12 V4 M4.5 6 L6.5 3.5 L8.5 6" fill="none" stroke="#2f6db5" stroke-width="1.2"/><rect x="5" y="9" width="3" height="4" fill="#aaa"/><path d="M10 1 V4 H12 V1" fill="none" stroke="#555"/></svg>
<svg class="a" style="left:463px;top:280.8px;" width="14" height="14" viewBox="0 0 14 14"><path d="M1 1.5 H5 M1 3.5 H5" stroke="#888"/><path d="M12 6.5 H3 M5 4.5 L2.5 6.5 L5 8.5" fill="none" stroke="#2f6db5" stroke-width="1.2"/><path d="M8 5 H12 M8 8 H12" stroke="#888"/><path d="M1 10.5 H5 M1 12.5 H5" stroke="#888"/></svg>
<svg class="a" style="left:463px;top:294.8px;" width="14" height="14" viewBox="0 0 14 14"><rect x="0.5" y="0.5" width="12" height="12" fill="#fff" stroke="#666"/><rect x="0.5" y="0.5" width="12" height="3" fill="#2f6db5"/><path d="M0.5 6.5 H12.5 M0.5 9.5 H12.5 M4.5 3.5 V12.5 M8.5 3.5 V12.5" stroke="#888"/></svg>
<svg class="a" style="left:463px;top:308.8px;" width="14" height="14" viewBox="0 0 14 14"><text x="1" y="11" font-family="Liberation Serif" font-style="italic" font-size="12" fill="#333">fx</text></svg>
<svg class="a" style="left:463px;top:322.8px;" width="14" height="14" viewBox="0 0 14 14"><rect x="0.5" y="0.5" width="6" height="3" fill="none" stroke="#777"/><path d="M12 6 H4 M6 4 L3.5 6 L6 8" fill="none" stroke="#2f6db5" stroke-width="1.2"/><rect x="0.5" y="8.5" width="6" height="4" fill="none" stroke="#777"/><path d="M3.5 8.5 V12.5 M0.5 10.5 H6.5" stroke="#777"/></svg>
<svg class="a" style="left:463px;top:336.8px;" width="14" height="14" viewBox="0 0 14 14"><path d="M3 1 L9 8 M9 1 L3 8" stroke="#444" stroke-width="1.1"/><circle cx="3" cy="10.5" r="2" fill="none" stroke="#444"/><circle cx="9" cy="10.5" r="2" fill="none" stroke="#444"/></svg>
<svg class="a" style="left:463px;top:350.8px;" width="14" height="14" viewBox="0 0 14 14"><path d="M2 3.5 H11 M3.5 6 H9.5 M2 8.5 H11 M3.5 11 H9.5" stroke="#777"/></svg>
<svg class="a" style="left:463px;top:364.8px;" width="14" height="14" viewBox="0 0 14 14"><rect x="0.5" y="0.5" width="12" height="12" fill="none" stroke="#aaa"/><path d="M6.5 0.5 V12.5 M0.5 6.5 H12.5" stroke="#aaa"/></svg>
<svg class="a" style="left:463px;top:378.8px;" width="14" height="14" viewBox="0 0 14 14"><rect x="0.5" y="4.5" width="9" height="8" fill="#fff" stroke="#666"/><path d="M2 4 V2 H11 V10" fill="none" stroke="#666"/><path d="M8 12 q3 -2 4 -5" fill="none" stroke="#666"/></svg>
<svg class="a" style="left:463px;top:392.8px;" width="14" height="14" viewBox="0 0 14 14"><path d="M0.5 1 H12.5 L8 6.5 V12.5 L5 11 V6.5 Z" fill="#555"/></svg>
<svg class="a" style="left:463px;top:406.8px;" width="14" height="14" viewBox="0 0 14 14"><path d="M1.5 0.5 H7 L9.5 3 V12.5 H1.5 Z" fill="#fff" stroke="#777"/><rect x="5" y="7" width="7.5" height="4.5" fill="#fff" stroke="#555"/><rect x="6" y="5.5" width="5" height="2" fill="#777"/></svg>
<svg class="a" style="left:463px;top:420.8px;" width="14" height="14" viewBox="0 0 14 14"><rect x="0.5" y="0.5" width="12" height="11" fill="#fff" stroke="#777"/><rect x="0.5" y="0.5" width="12" height="3" fill="#9ab7d6"/><path d="M0.5 6.5 H12.5 M4.5 0.5 V11.5" stroke="#777"/><path d="M6 8.5 H11" stroke="#2f6db5"/></svg>
<svg class="a" style="left:463px;top:434.8px;" width="14" height="14" viewBox="0 0 14 14"><path d="M1.5 0.5 H6 L8 2.5 V9.5 H1.5 Z" fill="#fff" stroke="#777"/><path d="M5 3.5 H9.5 L11.5 5.5 V12.5 H5 Z" fill="#fff" stroke="#777"/><path d="M6.5 7.5 H10 M6.5 9.5 H10" stroke="#999"/></svg>
<svg class="a" style="left:463px;top:448.8px;" width="14" height="14" viewBox="0 0 14 14"><path d="M3 1.5 L11 7 L3 12.5 Z" fill="#3f9a6e"/></svg>
<svg class="a" style="left:463px;top:462.8px;" width="14" height="14" viewBox="0 0 14 14"><text x="0" y="12" font-family="Liberation Sans" font-weight="bold" font-size="11" fill="#222">x</text><text x="8" y="6" font-family="Liberation Sans" font-size="6" fill="#222">2</text></svg>
<svg class="a" style="left:463px;top:476.8px;" width="14" height="14" viewBox="0 0 14 14"><rect x="0.5" y="0.5" width="12" height="12" fill="#fff" stroke="#777"/><rect x="0.5" y="0.5" width="12" height="2.5" fill="#2f6db5"/><text x="2" y="8" font-family="Liberation Sans" font-size="4.5" fill="#555">Я А</text><text x="2" y="12.5" font-family="Liberation Sans" font-size="4.5" fill="#555">А Я</text></svg>
<svg class="a" style="left:463px;top:490.8px;" width="14" height="14" viewBox="0 0 14 14"><path d="M1.5 0.5 H7 L10 3.5 V12.5 H1.5 Z" fill="#fff" stroke="#777"/><path d="M7 8 a3 3 0 1 1 5 2" fill="none" stroke="#3aa36a" stroke-width="1.3"/></svg>
<svg class="a" style="left:463px;top:504.79999999999995px;" width="14" height="14" viewBox="0 0 14 14"><rect x="0.5" y="0.5" width="12" height="12" fill="#fff" stroke="#777"/><path d="M0.5 3.5 H12.5 M0.5 9.5 H12.5" stroke="#777"/><path d="M2.5 6.5 H10.5 M4 5 L2.5 6.5 L4 8 M9 5 L10.5 6.5 L9 8" fill="none" stroke="#2f6db5"/></svg>
<svg class="a" style="left:463px;top:518.8px;" width="14" height="14" viewBox="0 0 14 14"><text x="0" y="5" font-family="Liberation Sans" font-size="5" fill="#555">ABC</text><path d="M1 9 L4 12 L11 5.5" fill="none" stroke="#2f6db5" stroke-width="1.8"/></svg>
<svg class="a" style="left:463px;top:532.8px;" width="14" height="14" viewBox="0 0 14 14"><path d="M0.5 3 H5 L6 4 H12 V12 H0.5 Z" fill="#e3b96a"/><path d="M0.5 12 L2.5 6 H13 L11 12 Z" fill="#f1d08a"/></svg>
<svg class="a" style="left:463px;top:546.8px;" width="14" height="14" viewBox="0 0 14 14"><path d="M1.5 4 L4.5 1 M1.5 4 L4.5 7 M1.5 4 H7.5 a3.8 3.8 0 0 1 0 7.6 H4" fill="none" stroke="#2f6db5" stroke-width="1.8"/></svg>
<div class="a" style="left:463px;top:560.8px;width:14px;height:6.2000000000000455px;overflow:hidden"><svg width="14" height="14"><rect x="1" y="2" width="9" height="7" fill="#fff" stroke="#888"/><path d="M1 2 L5.5 6 L10 2" fill="none" stroke="#888"/></svg></div>
<div class="a" style="left:643px;top:183px;width:14px;height:384px;background:#e6e6e6"></div>
<div class="a" style="left:643px;top:184px;width:13px;height:13px;background:#fff;box-sizing:border-box;border:1px solid #c6c6c6"></div>
<svg class="a" style="left:645px;top:187px;" width="9" height="6" viewBox="0 0 9 6"><path d="M1 5 L4.5 1.5 L8 5 Z" fill="#444"/></svg>
<div class="a" style="left:643px;top:196px;width:13px;height:183px;background:#fff;box-sizing:border-box;border:1px solid #c6c6c6"></div>
<div class="a" style="left:643px;top:553px;width:13px;height:13px;background:#fff;box-sizing:border-box;border:1px solid #c6c6c6"></div>
<svg class="a" style="left:645px;top:557px;" width="9" height="6" viewBox="0 0 9 6"><path d="M1 1 L4.5 4.5 L8 1 Z" fill="#444"/></svg>
<div class="a" style="left:664px;top:340px;width:76px;height:20px;background:#e6e6e6;box-sizing:border-box;border:1px solid #dadada"></div>
<div class="t" style="left:502px;width:400px;text-align:center;top:346px;font-size:10px;color:#a6a6a6;">Добавить &gt;<span style="margin-left:1.5px">&gt;</span></div>
<div class="a" style="left:664px;top:362px;width:76px;height:21px;background:#e6e6e6;box-sizing:border-box;border:1px solid #dadada"></div>
<div class="t" style="left:502px;width:400px;text-align:center;top:369px;font-size:10px;color:#a6a6a6;">&lt;&#8201;&lt; Уда<u>л</u>ить</div>
<div class="a" style="left:747px;top:182px;width:277px;height:316px;overflow:hidden">
<div class="a" style="left:0;top:0;width:290px;height:315px;box-sizing:border-box;border:1px solid #ababab"></div>
<div class="a" style="left:1px;top:1px;width:270px;height:12px;background:#e1e1e1"></div>
<div class="t" style="left:2px;top:3px;font-size:10px;font-weight:bold;color:#444">Основные вкладки</div>
<div class="a" style="left:14px;top:30.5px;width:256px;height:16.5px;background:#dadada"></div>
<svg class="a" style="left:4px;top:17.5px" width="7" height="7"><rect x="0.5" y="0.5" width="5.5" height="5.5" fill="#fff" stroke="#999"/><path d="M1.7 3.25 H4.8" stroke="#111"/><path d="M3.25 1.7 V4.8" stroke="#111"/></svg>
<svg class="a" style="left:15px;top:14.5px" width="11" height="11"><rect x="0.5" y="0.5" width="9.6" height="9.6" fill="#fff" stroke="#333"/><path d="M2.2 5.3 L4.2 7.5 L8.5 2.5" fill="none" stroke="#222" stroke-width="1.1"/></svg>
<div class="t" style="left:28px;top:16px;font-size:10px;color:#646464;">Удаление фона</div>
<svg class="a" style="left:4px;top:34.19999999999999px" width="7" height="7"><rect x="0.5" y="0.5" width="5.5" height="5.5" fill="#fff" stroke="#999"/><path d="M1.7 3.25 H4.8" stroke="#111"/></svg>
<svg class="a" style="left:15px;top:31.19999999999999px" width="11" height="11"><rect x="0.5" y="0.5" width="9.6" height="9.6" fill="#fff" stroke="#333"/><path d="M2.2 5.3 L4.2 7.5 L8.5 2.5" fill="none" stroke="#222" stroke-width="1.1"/></svg>
<div class="t" style="left:28px;top:33px;font-size:10px;color:#222;font-weight:bold">Главная</div>
<svg class="a" style="left:33px;top:51.19999999999999px" width="7" height="7"><rect x="0.5" y="0.5" width="5.5" height="5.5" fill="#fff" stroke="#999"/><path d="M1.7 3.25 H4.8" stroke="#111"/><path d="M3.25 1.7 V4.8" stroke="#111"/></svg>
<div class="t" style="left:44px;top:50px;font-size:10px;color:#646464">Буфер обмена</div>
<svg class="a" style="left:33px;top:65.19999999999999px" width="7" height="7"><rect x="0.5" y="0.5" width="5.5" height="5.5" fill="#fff" stroke="#999"/><path d="M1.7 3.25 H4.8" stroke="#111"/><path d="M3.25 1.7 V4.8" stroke="#111"/></svg>
<div class="t" style="left:44px;top:64px;font-size:10px;color:#646464">Шрифт</div>
<svg class="a" style="left:33px;top:79.19999999999999px" width="7" height="7"><rect x="0.5" y="0.5" width="5.5" height="5.5" fill="#fff" stroke="#999"/><path d="M1.7 3.25 H4.8" stroke="#111"/><path d="M3.25 1.7 V4.8" stroke="#111"/></svg>
<div class="t" style="left:44px;top:78px;font-size:10px;color:#646464">Выравнивание</div>
<svg class="a" style="left:33px;top:93.19999999999999px" width="7" height="7"><rect x="0.5" y="0.5" width="5.5" height="5.5" fill="#fff" stroke="#999"/><path d="M1.7 3.25 H4.8" stroke="#111"/><path d="M3.25 1.7 V4.8" stroke="#111"/></svg>
<div class="t" style="left:44px;top:92px;font-size:10px;color:#646464">Число</div>
<svg class="a" style="left:33px;top:107.19999999999999px" width="7" height="7"><rect x="0.5" y="0.5" width="5.5" height="5.5" fill="#fff" stroke="#999"/><path d="M1.7 3.25 H4.8" stroke="#111"/><path d="M3.25 1.7 V4.8" stroke="#111"/></svg>
<div class="t" style="left:44px;top:106px;font-size:10px;color:#646464">Стили</div>
<svg class="a" style="left:33px;top:121.19999999999999px" width="7" height="7"><rect x="0.5" y="0.5" width="5.5" height="5.5" fill="#fff" stroke="#999"/><path d="M1.7 3.25 H4.8" stroke="#111"/><path d="M3.25 1.7 V4.8" stroke="#111"/></svg>
<div class="t" style="left:44px;top:120px;font-size:10px;color:#646464">Ячейки</div>
<svg class="a" style="left:33px;top:135.2px" width="7" height="7"><rect x="0.5" y="0.5" width="5.5" height="5.5" fill="#fff" stroke="#999"/><path d="M1.7 3.25 H4.8" stroke="#111"/><path d="M3.25 1.7 V4.8" stroke="#111"/></svg>
<div class="t" style="left:44px;top:134px;font-size:10px;color:#646464">Редактирование</div>
<svg class="a" style="left:4px;top:148.89999999999998px" width="7" height="7"><rect x="0.5" y="0.5" width="5.5" height="5.5" fill="#fff" stroke="#999"/><path d="M1.7 3.25 H4.8" stroke="#111"/><path d="M3.25 1.7 V4.8" stroke="#111"/></svg>
<svg class="a" style="left:15px;top:145.89999999999998px" width="11" height="11"><rect x="0.5" y="0.5" width="9.6" height="9.6" fill="#fff" stroke="#333"/><path d="M2.2 5.3 L4.2 7.5 L8.5 2.5" fill="none" stroke="#222" stroke-width="1.1"/></svg>
<div class="t" style="left:28px;top:147px;font-size:10px;color:#646464">Вставка</div>
<svg class="a" style="left:4px;top:165.59999999999997px" width="7" height="7"><rect x="0.5" y="0.5" width="5.5" height="5.5" fill="#fff" stroke="#999"/><path d="M1.7 3.25 H4.8" stroke="#111"/><path d="M3.25 1.7 V4.8" stroke="#111"/></svg>
<svg class="a" style="left:15px;top:162.59999999999997px" width="11" height="11"><rect x="0.5" y="0.5" width="9.6" height="9.6" fill="#fff" stroke="#333"/></svg>
<div class="t" style="left:28px;top:164px;font-size:10px;color:#646464">Рисование</div>
<svg class="a" style="left:4px;top:182.29999999999995px" width="7" height="7"><rect x="0.5" y="0.5" width="5.5" height="5.5" fill="#fff" stroke="#999"/><path d="M1.7 3.25 H4.8" stroke="#111"/><path d="M3.25 1.7 V4.8" stroke="#111"/></svg>
<svg class="a" style="left:15px;top:179.29999999999995px" width="11" height="11"><rect x="0.5" y="0.5" width="9.6" height="9.6" fill="#fff" stroke="#333"/><path d="M2.2 5.3 L4.2 7.5 L8.5 2.5" fill="none" stroke="#222" stroke-width="1.1"/></svg>
<div class="t" style="left:28px;top:181px;font-size:10px;color:#646464">Разметка страницы</div>
<svg class="a" style="left:4px;top:199.0px" width="7" height="7"><rect x="0.5" y="0.5" width="5.5" height="5.5" fill="#fff" stroke="#999"/><path d="M1.7 3.25 H4.8" stroke="#111"/><path d="M3.25 1.7 V4.8" stroke="#111"/></svg>
<svg class="a" style="left:15px;top:196.0px" width="11" height="11"><rect x="0.5" y="0.5" width="9.6" height="9.6" fill="#fff" stroke="#333"/><path d="M2.2 5.3 L4.2 7.5 L8.5 2.5" fill="none" stroke="#222" stroke-width="1.1"/></svg>
<div class="t" style="left:28px;top:198px;font-size:10px;color:#646464">Формулы</div>
<svg class="a" style="left:4px;top:215.7px" width="7" height="7"><rect x="0.5" y="0.5" width="5.5" height="5.5" fill="#fff" stroke="#999"/><path d="M1.7 3.25 H4.8" stroke="#111"/><path d="M3.25 1.7 V4.8" stroke="#111"/></svg>
<svg class="a" style="left:15px;top:212.7px" width="11" height="11"><rect x="0.5" y="0.5" width="9.6" height="9.6" fill="#fff" stroke="#333"/><path d="M2.2 5.3 L4.2 7.5 L8.5 2.5" fill="none" stroke="#222" stroke-width="1.1"/></svg>
<div class="t" style="left:28px;top:214px;font-size:10px;color:#646464">Данные</div>
<svg class="a" style="left:4px;top:232.39999999999998px" width="7" height="7"><rect x="0.5" y="0.5" width="5.5" height="5.5" fill="#fff" stroke="#999"/><path d="M1.7 3.25 H4.8" stroke="#111"/><path d="M3.25 1.7 V4.8" stroke="#111"/></svg>
<svg class="a" style="left:15px;top:229.39999999999998px" width="11" height="11"><rect x="0.5" y="0.5" width="9.6" height="9.6" fill="#fff" stroke="#333"/><path d="M2.2 5.3 L4.2 7.5 L8.5 2.5" fill="none" stroke="#222" stroke-width="1.1"/></svg>
<div class="t" style="left:28px;top:231px;font-size:10px;color:#646464">Рецензирование</div>
<svg class="a" style="left:4px;top:249.09999999999997px" width="7" height="7"><rect x="0.5" y="0.5" width="5.5" height="5.5" fill="#fff" stroke="#999"/><path d="M1.7 3.25 H4.8" stroke="#111"/><path d="M3.25 1.7 V4.8" stroke="#111"/></svg>
<svg class="a" style="left:15px;top:246.09999999999997px" width="11" height="11"><rect x="0.5" y="0.5" width="9.6" height="9.6" fill="#fff" stroke="#333"/><path d="M2.2 5.3 L4.2 7.5 L8.5 2.5" fill="none" stroke="#222" stroke-width="1.1"/></svg>
<div class="t" style="left:28px;top:248px;font-size:10px;color:#646464">Вид</div>
<svg class="a" style="left:4px;top:265.79999999999995px" width="7" height="7"><rect x="0.5" y="0.5" width="5.5" height="5.5" fill="#fff" stroke="#999"/><path d="M1.7 3.25 H4.8" stroke="#111"/><path d="M3.25 1.7 V4.8" stroke="#111"/></svg>
<svg class="a" style="left:15px;top:262.79999999999995px" width="11" height="11"><rect x="0.5" y="0.5" width="9.6" height="9.6" fill="#fff" stroke="#333"/></svg>
<div class="t" style="left:28px;top:264px;font-size:10px;color:#646464">Разработчик</div>
<svg class="a" style="left:15px;top:279.5px" width="11" height="11"><rect x="0.5" y="0.5" width="9.6" height="9.6" fill="#fff" stroke="#333"/><path d="M2.2 5.3 L4.2 7.5 L8.5 2.5" fill="none" stroke="#222" stroke-width="1.1"/></svg>
<div class="t" style="left:28px;top:281px;font-size:10px;color:#646464">Надстройки</div>
<svg class="a" style="left:4px;top:299.19999999999993px" width="7" height="7"><rect x="0.5" y="0.5" width="5.5" height="5.5" fill="#fff" stroke="#999"/><path d="M1.7 3.25 H4.8" stroke="#111"/><path d="M3.25 1.7 V4.8" stroke="#111"/></svg>
<svg class="a" style="left:15px;top:296.19999999999993px" width="11" height="11"><rect x="0.5" y="0.5" width="9.6" height="9.6" fill="#fff" stroke="#333"/><path d="M2.2 5.3 L4.2 7.5 L8.5 2.5" fill="none" stroke="#222" stroke-width="1.1"/></svg>
<div class="t" style="left:28px;top:298px;font-size:10px;color:#646464">Справка</div>
<svg class="a" style="left:4px;top:315.9px" width="7" height="7"><rect x="0.5" y="0.5" width="5.5" height="5.5" fill="#fff" stroke="#999"/><path d="M1.7 3.25 H4.8" stroke="#111"/><path d="M3.25 1.7 V4.8" stroke="#111"/></svg>
<svg class="a" style="left:15px;top:312.9px" width="11" height="11"><rect x="0.5" y="0.5" width="9.6" height="9.6" fill="#fff" stroke="#333"/></svg>
<div class="t" style="left:28px;top:314px;font-size:10px;color:#646464"></div>
<div class="a" style="left:270px;top:1px;width:14px;height:313px;background:#e6e6e6"></div>
<div class="a" style="left:270px;top:2px;width:13px;height:12px;background:#fff;box-sizing:border-box;border:1px solid #c6c6c6"></div>
<svg class="a" style="left:272px;top:5px" width="9" height="6"><path d="M1 5 L4.5 1.5 L8 5 Z" fill="#444"/></svg>
<div class="a" style="left:270px;top:14px;width:13px;height:274px;background:#fff;box-sizing:border-box;border:1px solid #c6c6c6"></div>
<div class="a" style="left:270px;top:302px;width:13px;height:12px;background:#fff;box-sizing:border-box;border:1px solid #c6c6c6"></div>
<svg class="a" style="left:272px;top:305px" width="9" height="6"><path d="M1 1 L4.5 4.5 L8 1 Z" fill="#444"/></svg>
</div>
<div class="a" style="left:747px;top:500px;width:90px;height:21px;background:#e1e1e1;box-sizing:border-box;border:1px solid #adadad"></div>
<div class="t" style="left:592.0px;width:400px;text-align:center;top:507px;font-size:10px;color:#333;"><u>С</u>оздать вкладку</div>
<div class="a" style="left:844px;top:500px;width:85px;height:21px;background:#e1e1e1;box-sizing:border-box;border:1px solid #adadad"></div>
<div class="t" style="left:686.5px;width:400px;text-align:center;top:507px;font-size:10px;color:#333;">Создать <u>г</u>руппу</div>
<div class="a" style="left:937px;top:500px;width:87px;height:21px;overflow:hidden"><div class="a" style="left:0;top:0;width:100px;height:21px;background:#e1e1e1;box-sizing:border-box;border:1px solid #adadad"></div><div class="t" style="left:5px;top:7px;font-size:10px;color:#333"><u>П</u>ереименовать...</div></div>
<div class="t " style="left:748px;top:529px;font-size:10px;color:#7a7a7a;">Настройки:</div>
<div class="a" style="left:809px;top:524px;width:57px;height:19px;background:#e1e1e1;box-sizing:border-box;border:1px solid #adadad"></div>
<div class="t" style="left:632px;width:400px;text-align:center;top:530px;font-size:10px;color:#333;">С<u>б</u>рос</div>
<svg class="a" style="left:849.8px;top:530.5px;" width="8" height="6" viewBox="0 0 8 6"><path d="M1 1.5 L7 1.5 L4 5.0 Z" fill="#111"/></svg>
<svg class="a" style="left:867px;top:527px;" width="10" height="10" viewBox="0 0 10 10"><circle cx="5" cy="5" r="4.2" fill="none" stroke="#9a9a9a" stroke-width="0.9"/><path d="M5 4.2 V7.6" stroke="#777" stroke-width="1"/><circle cx="5" cy="2.6" r="0.6" fill="#777"/></svg>
<div class="a" style="left:809px;top:548px;width:102px;height:19px;background:#e1e1e1;box-sizing:border-box;border:1px solid #adadad"></div>
<div class="t" style="left:653px;width:400px;text-align:center;top:554px;font-size:10px;color:#333;">И<u>м</u>порт и экспорт</div>
<svg class="a" style="left:900.3px;top:554.5px;" width="8" height="6" viewBox="0 0 8 6"><path d="M1 1.5 L7 1.5 L4 5.0 Z" fill="#111"/></svg>
<svg class="a" style="left:913px;top:551px;" width="10" height="10" viewBox="0 0 10 10"><circle cx="5" cy="5" r="4.2" fill="none" stroke="#9a9a9a" stroke-width="0.9"/><path d="M5 4.2 V7.6" stroke="#777" stroke-width="1"/><circle cx="5" cy="2.6" r="0.6" fill="#777"/></svg>
<div class="a" style="left:440px;top:580px;width:584px;height:13px;background:#e6e6e6"></div>
<div class="a" style="left:441px;top:580px;width:12px;height:13px;background:#fff;box-sizing:border-box;border:1px solid #c6c6c6"></div>
<svg class="a" style="left:443px;top:583px;" width="7" height="8" viewBox="0 0 7 8"><path d="M5 1 L1.5 4 L5 7 Z" fill="#444"/></svg>
<div class="a" style="left:453px;top:580px;width:514px;height:13px;background:#fff;box-sizing:border-box;border:1px solid #c6c6c6"></div>
<div class="a" style="left:1010px;top:580px;width:13px;height:13px;background:#fff;box-sizing:border-box;border:1px solid #c6c6c6"></div>
<svg class="a" style="left:1013px;top:583px;" width="7" height="8" viewBox="0 0 7 8"><path d="M2 1 L5.5 4 L2 7 Z" fill="#444"/></svg>
</div>
<div class="a" style="left:901px;top:596px;width:58px;height:20px;background:#e1e1e1;box-sizing:border-box;border:1px solid #2f5a40"></div>
<div class="t" style="left:730.0px;width:400px;text-align:center;top:602px;font-size:10px;color:#333;">OK</div>
<div class="a" style="left:902px;top:597px;width:56px;height:18px;box-sizing:border-box;border:1px solid #f4fbf6"></div>
<div class="a" style="left:967px;top:596px;width:58px;height:20px;background:#e1e1e1;box-sizing:border-box;border:1px solid #adadad"></div>
<div class="t" style="left:796.0px;width:400px;text-align:center;top:602px;font-size:10px;color:#333;">Отмена</div>
<div class="a" style="left:1026px;top:619px;width:1.5px;height:1.5px;background:#999"></div>
<div class="a" style="left:1023px;top:619px;width:1.5px;height:1.5px;background:#999"></div>
<div class="a" style="left:1020px;top:619px;width:1.5px;height:1.5px;background:#999"></div>
<div class="a" style="left:1026px;top:616px;width:1.5px;height:1.5px;background:#999"></div>
<div class="a" style="left:1023px;top:616px;width:1.5px;height:1.5px;background:#999"></div>
<div class="a" style="left:1026px;top:613px;width:1.5px;height:1.5px;background:#999"></div>
</body></html>
